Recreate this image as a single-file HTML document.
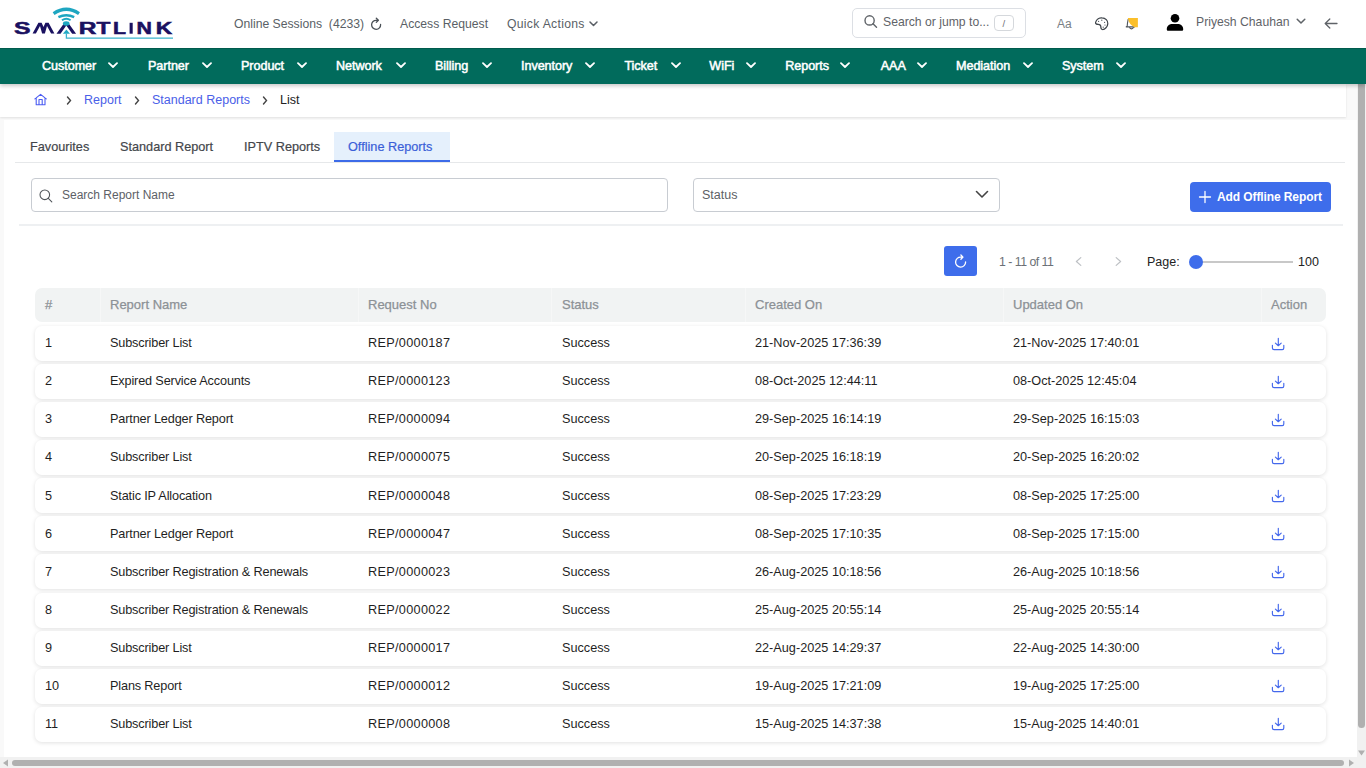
<!DOCTYPE html>
<html><head><meta charset="utf-8">
<style>
*{box-sizing:border-box;margin:0;padding:0}
html,body{width:1366px;height:768px;overflow:hidden;background:#f9f9f9;font-family:"Liberation Sans",sans-serif;color:#222}
.abs{position:absolute}
.t{position:absolute;white-space:nowrap;line-height:1}
#top{position:absolute;left:0;top:0;width:1366px;height:48px;background:#fff;z-index:2}
#nav{position:absolute;left:0;top:48px;width:1366px;height:36px;background:#016b5c;box-shadow:0 2px 4px rgba(0,0,0,.22);z-index:1}
.nv{position:absolute;z-index:3;top:60px;color:#fff;font-size:12.6px;font-weight:400;-webkit-text-stroke:0.5px #fff;letter-spacing:-0.05px;line-height:1;white-space:nowrap}
.nvc{position:absolute;z-index:3;top:62px}
#bc{position:absolute;left:0;top:84px;width:1346px;height:33px;background:#fff;box-shadow:0 1px 2px rgba(0,0,0,.10)}
#card{position:absolute;left:4px;top:120px;width:1353px;height:638px;background:#fff}
.tab{position:absolute;top:141.2px;-webkit-text-stroke:0.2px currentColor;font-size:12.7px;color:#43464b;white-space:nowrap;line-height:1}
.row{position:absolute;left:35px;width:1291px;height:35px;background:#fff;border-radius:7px;box-shadow:0 1px 4px rgba(0,0,0,.12)}
.cell{position:absolute;font-size:12.7px;color:#1f1f1f;white-space:nowrap;line-height:1}
.hd{position:absolute;top:298px;font-size:13px;color:#8c9196;-webkit-text-stroke:0.25px currentColor;white-space:nowrap;line-height:1}
.bct{position:absolute;top:93.5px;font-size:12.5px;white-space:nowrap;line-height:1}

</style></head><body>
<div id="top">
  <svg class="abs" style="left:0;top:0" width="200" height="46" viewBox="0 0 200 46">
<text x="14" y="33.6" font-family="Liberation Sans" font-weight="700" font-size="15.6" fill="#1a1160" stroke="#1a1160" stroke-width="0.5" textLength="16.5" lengthAdjust="spacingAndGlyphs">S</text><path d="M32.6 33.6 38.4 22.8H41.6L43.5 26.9 45.4 22.8H48.6L54.4 33.6H51.1L47 25.9 44.9 33.6H42.1L40 25.9 35.9 33.6Z" fill="#1a1160"/><text x="78.8" y="33.6" font-family="Liberation Sans" font-weight="700" font-size="15.6" fill="#1a1160" stroke="#1a1160" stroke-width="0.5" textLength="17.7" lengthAdjust="spacingAndGlyphs">R</text><text x="96.5" y="33.6" font-family="Liberation Sans" font-weight="700" font-size="15.6" fill="#1a1160" stroke="#1a1160" stroke-width="0.5" textLength="13.9" lengthAdjust="spacingAndGlyphs">T</text><text x="113" y="33.6" font-family="Liberation Sans" font-weight="700" font-size="15.6" fill="#1a1160" stroke="#1a1160" stroke-width="0.5" textLength="13.0" lengthAdjust="spacingAndGlyphs">L</text><rect x="129.6" y="22.8" width="3.1" height="10.9" fill="#1a1160"/><text x="136.5" y="33.6" font-family="Liberation Sans" font-weight="700" font-size="15.6" fill="#1a1160" stroke="#1a1160" stroke-width="0.5" textLength="15.4" lengthAdjust="spacingAndGlyphs">N</text><text x="155.8" y="33.6" font-family="Liberation Sans" font-weight="700" font-size="15.6" fill="#1a1160" stroke="#1a1160" stroke-width="0.5" textLength="16.5" lengthAdjust="spacingAndGlyphs">K</text>
<path d="M56.5 33.7 64.4 22.8H68.2L76.1 33.7H72.2L66.3 25.6 60.5 33.7Z" fill="#1a1160"/>
<path d="M62.9 33.7 66.4 29.4 70 33.7Z" fill="#22a9c4"/>
<path d="M66.4 33.5V38.2H173" fill="none" stroke="#3ab4cd" stroke-width="1.3"/>
<path d="M53.6 13.6Q66.3 5 79 13.6" fill="none" stroke="#1ea6c1" stroke-width="3.3"/>
<path d="M58.4 17.2Q66.3 13.4 74.2 17.2" fill="none" stroke="#1ea6c1" stroke-width="2.5"/>
<path d="M62 20.3Q66.3 17.1 70.6 20.3" fill="none" stroke="#1ea6c1" stroke-width="2"/>
<ellipse cx="66.2" cy="23.5" rx="3.3" ry="2.2" fill="#1ea6c1"/>
</svg>
  <div class="t" style="left:234px;top:18px;font-size:12.2px;color:#5a5f66">Online Sessions&nbsp; (4233)</div>
  <svg class="abs" style="left:364px;top:12px" width="24" height="22" viewBox="364 12 24 22" fill="none" stroke="#4a5056" stroke-width="1.3" stroke-linecap="round" stroke-linejoin="round"><path d="M380.6 24.5A4.5 4.5 0 1 1 376.3 20.3H378.2M376.3 18.2 378.4 20.3 376.3 22.4"/></svg>
  <div class="t" style="left:400px;top:18px;font-size:12.2px;color:#5a5f66">Access Request</div>
  <div class="t" style="left:507px;top:18px;font-size:12.2px;color:#5a5f66;letter-spacing:0.3px">Quick Actions</div>
  <svg class="abs" style="left:589px;top:21px" width="9" height="6" viewBox="0 0 9 6" fill="none" stroke="#5a5f66" stroke-width="1.5" stroke-linecap="round" stroke-linejoin="round"><path d="M1 1 4.5 4.5 8 1"/></svg>
  <div class="abs" style="left:852px;top:8px;width:174px;height:30px;border:1px solid #dcdfe4;border-radius:5px"></div>
  <svg class="abs" style="left:864px;top:15px" width="14" height="13" viewBox="0 0 14 13" fill="none" stroke="#5f6368" stroke-width="1.4" stroke-linecap="round"><circle cx="5.6" cy="5.4" r="4.6"/><path d="M9 8.8 12.5 12.2"/></svg>
  <div class="t" style="left:883px;top:16px;font-size:12.2px;color:#5f6368">Search or jump to...</div>
  <div class="abs" style="left:994px;top:15px;width:20px;height:16px;border:1px solid #d5d8dc;border-radius:4px"></div>
  <div class="t" style="left:1002.5px;top:19px;font-size:9.5px;color:#6a6e73">/</div>
  <div class="t" style="left:1057px;top:18px;font-size:12px;color:#7a7f85">Aa</div>
  <svg class="abs" style="left:1090px;top:12px" width="24" height="22" viewBox="1090 12 24 22"><path d="M1095.6 22.4C1096.5 19.2 1099.5 17.6 1102 17.8 1105.5 18 1108 20.6 1107.8 23.6 1107.6 26.8 1105 29.6 1102.4 29.5 1101 29.4 1100.8 27.8 1100.8 26.6 1100.8 25 1099.8 24.3 1098.2 24.3 1096.6 24.3 1095.2 23.8 1095.6 22.4Z" fill="none" stroke="#40464c" stroke-width="1.25" stroke-linejoin="round"/><g fill="#40464c"><circle cx="1098.6" cy="21.3" r=".6"/><circle cx="1101.8" cy="20.2" r=".6"/><circle cx="1104.6" cy="22.3" r=".6"/><circle cx="1105" cy="25" r=".6"/><circle cx="1103.2" cy="27.2" r=".6"/></g></svg>
  <svg class="abs" style="left:1120px;top:12px" width="24" height="22" viewBox="1120 12 24 22"><path d="M1128.2 19.2Q1127.4 23 1127.2 26.2L1125.9 26.9H1134.5" fill="none" stroke="#50565c" stroke-width="1.1" stroke-linecap="round"/><path d="M1129.6 27.7Q1131.4 30.1 1133.4 27.7" fill="none" stroke="#50565c" stroke-width="1.1" stroke-linecap="round"/><path d="M1128 17.9H1137.9V27.2H1134.6Q1129.3 25.2 1128 18.6Z" fill="#fbbf2a"/></svg>
  <svg class="abs" style="left:1166px;top:13px" width="18" height="18" viewBox="0 0 18 18"><circle cx="9" cy="5.2" r="4.3" fill="#000"/><path d="M0.8 16.2c0-3 2.3-5.2 5.2-5.2h6c2.9 0 5.2 2.2 5.2 5.2v0.2c0 0.8-0.6 1.3-1.3 1.3H2.1c-0.7 0-1.3-0.5-1.3-1.3z" fill="#000"/></svg>
  <div class="t" style="left:1196px;top:16px;font-size:12.2px;color:#5f6368">Priyesh Chauhan</div>
  <svg class="abs" style="left:1296px;top:18px" width="10" height="7" viewBox="0 0 10 7" fill="none" stroke="#5f6368" stroke-width="1.5" stroke-linecap="round" stroke-linejoin="round"><path d="M1.2 1.2 5 5 8.8 1.2"/></svg>
  <svg class="abs" style="left:1324px;top:18px" width="14" height="11" viewBox="0 0 14 11" fill="none" stroke="#5f6368" stroke-width="1.3" stroke-linecap="round" stroke-linejoin="round"><path d="M13 5.5H1.2M5.8 1 1.2 5.5 5.8 10"/></svg>
</div>
<div id="nav"></div>
<div class="abs" style="left:0;top:48px;width:1366px;height:1px;background:#005b4d;z-index:2"></div>
<div class="nv" style="left:42px">Customer</div><svg class="nvc" style="left:108.0px" width="10" height="7" viewBox="0 0 10 7" fill="none" stroke="#fff" stroke-width="1.8" stroke-linecap="round" stroke-linejoin="round"><path d="M1 1.2 5 5 9 1.2"/></svg>
<div class="nv" style="left:148px">Partner</div><svg class="nvc" style="left:201.5px" width="10" height="7" viewBox="0 0 10 7" fill="none" stroke="#fff" stroke-width="1.8" stroke-linecap="round" stroke-linejoin="round"><path d="M1 1.2 5 5 9 1.2"/></svg>
<div class="nv" style="left:241px">Product</div><svg class="nvc" style="left:296.5px" width="10" height="7" viewBox="0 0 10 7" fill="none" stroke="#fff" stroke-width="1.8" stroke-linecap="round" stroke-linejoin="round"><path d="M1 1.2 5 5 9 1.2"/></svg>
<div class="nv" style="left:336px">Network</div><svg class="nvc" style="left:395.5px" width="10" height="7" viewBox="0 0 10 7" fill="none" stroke="#fff" stroke-width="1.8" stroke-linecap="round" stroke-linejoin="round"><path d="M1 1.2 5 5 9 1.2"/></svg>
<div class="nv" style="left:435px">Billing</div><svg class="nvc" style="left:481.5px" width="10" height="7" viewBox="0 0 10 7" fill="none" stroke="#fff" stroke-width="1.8" stroke-linecap="round" stroke-linejoin="round"><path d="M1 1.2 5 5 9 1.2"/></svg>
<div class="nv" style="left:521px">Inventory</div><svg class="nvc" style="left:584.9px" width="10" height="7" viewBox="0 0 10 7" fill="none" stroke="#fff" stroke-width="1.8" stroke-linecap="round" stroke-linejoin="round"><path d="M1 1.2 5 5 9 1.2"/></svg>
<div class="nv" style="left:624.4px">Ticket</div><svg class="nvc" style="left:670.7px" width="10" height="7" viewBox="0 0 10 7" fill="none" stroke="#fff" stroke-width="1.8" stroke-linecap="round" stroke-linejoin="round"><path d="M1 1.2 5 5 9 1.2"/></svg>
<div class="nv" style="left:709.3px">WiFi</div><svg class="nvc" style="left:746.0px" width="10" height="7" viewBox="0 0 10 7" fill="none" stroke="#fff" stroke-width="1.8" stroke-linecap="round" stroke-linejoin="round"><path d="M1 1.2 5 5 9 1.2"/></svg>
<div class="nv" style="left:785.2px">Reports</div><svg class="nvc" style="left:840.4px" width="10" height="7" viewBox="0 0 10 7" fill="none" stroke="#fff" stroke-width="1.8" stroke-linecap="round" stroke-linejoin="round"><path d="M1 1.2 5 5 9 1.2"/></svg>
<div class="nv" style="left:880.7px">AAA</div><svg class="nvc" style="left:916.5px" width="10" height="7" viewBox="0 0 10 7" fill="none" stroke="#fff" stroke-width="1.8" stroke-linecap="round" stroke-linejoin="round"><path d="M1 1.2 5 5 9 1.2"/></svg>
<div class="nv" style="left:956px">Mediation</div><svg class="nvc" style="left:1022.8px" width="10" height="7" viewBox="0 0 10 7" fill="none" stroke="#fff" stroke-width="1.8" stroke-linecap="round" stroke-linejoin="round"><path d="M1 1.2 5 5 9 1.2"/></svg>
<div class="nv" style="left:1062px">System</div><svg class="nvc" style="left:1115.5px" width="10" height="7" viewBox="0 0 10 7" fill="none" stroke="#fff" stroke-width="1.8" stroke-linecap="round" stroke-linejoin="round"><path d="M1 1.2 5 5 9 1.2"/></svg>

<div id="bc"></div>
<svg class="abs" style="left:30px;top:90px" width="20" height="20" viewBox="30 90 20 20" fill="none" stroke="#4b5cf2" stroke-width="1.1" stroke-linejoin="round" stroke-linecap="round"><path d="M34.9 98.9 40.6 94.4 46.3 98.9M36.2 97.9V104.8H45V97.9M39 104.8V99.5H42.2V104.8"/></svg>
<svg class="abs" style="left:66px;top:96px" width="6" height="9" viewBox="0 0 6 9" fill="none" stroke="#444" stroke-width="1.4" stroke-linecap="round"><path d="M1.5 1 4.5 4.5 1.5 8"/></svg>
<div class="bct" style="left:84px;color:#4a60e8">Report</div>
<svg class="abs" style="left:134px;top:96px" width="6" height="9" viewBox="0 0 6 9" fill="none" stroke="#444" stroke-width="1.4" stroke-linecap="round"><path d="M1.5 1 4.5 4.5 1.5 8"/></svg>
<div class="bct" style="left:152px;color:#4a60e8">Standard Reports</div>
<svg class="abs" style="left:262px;top:96px" width="6" height="9" viewBox="0 0 6 9" fill="none" stroke="#444" stroke-width="1.4" stroke-linecap="round"><path d="M1.5 1 4.5 4.5 1.5 8"/></svg>
<div class="bct" style="left:280px;color:#222">List</div>

<div id="card"></div>
<div class="abs" style="left:15px;top:162px;width:1330px;height:1px;background:#e6e8ea"></div>
<div class="abs" style="left:334px;top:132px;width:116px;height:30px;background:#e5f0fc;border-bottom:2px solid #3d6be8"></div>
<div class="tab" style="left:30px">Favourites</div>
<div class="tab" style="left:120px">Standard Report</div>
<div class="tab" style="left:244px">IPTV Reports</div>
<div class="tab" style="left:348px;color:#3a5fd8">Offline Reports</div>

<div class="abs" style="left:31px;top:178px;width:637px;height:34px;border:1px solid #c8ccd2;border-radius:4px;background:#fff"></div>
<svg class="abs" style="left:39px;top:188.5px" width="14" height="14" viewBox="0 0 14 14" fill="none" stroke="#50555a" stroke-width="1.1" stroke-linecap="round"><circle cx="5.8" cy="5.8" r="4.8"/><path d="M9.3 9.3 12.8 12.8"/></svg>
<div class="t" style="left:62px;top:189px;font-size:12px;color:#5d6166">Search Report Name</div>

<div class="abs" style="left:693px;top:178px;width:307px;height:34px;border:1px solid #c8ccd2;border-radius:4px;background:#fff"></div>
<div class="t" style="left:702px;top:189px;font-size:12.5px;color:#5d6166">Status</div>
<svg class="abs" style="left:975px;top:190px" width="14" height="9" viewBox="0 0 14 9" fill="none" stroke="#444" stroke-width="1.6" stroke-linecap="round" stroke-linejoin="round"><path d="M1.5 1.5 7 7 12.5 1.5"/></svg>

<div class="abs" style="left:1190px;top:182px;width:141px;height:30px;background:#3e6deb;border-radius:4px"></div>
<svg class="abs" style="left:1198px;top:190px" width="14" height="14" viewBox="0 0 14 14" fill="none" stroke="#fff" stroke-width="1.3" stroke-linecap="round"><path d="M7 1.5v11M1.5 7h11"/></svg>
<div class="t" style="left:1217px;top:191px;font-size:12px;font-weight:700;color:#fff;letter-spacing:-0.1px">Add Offline Report</div>

<div class="abs" style="left:19px;top:224px;width:1324px;height:2px;background:#eef0f2"></div>

<div class="abs" style="left:944px;top:246px;width:33px;height:30px;background:#3e6deb;border-radius:3px"></div>
<svg class="abs" style="left:948px;top:250px" width="24" height="24" viewBox="948 250 24 24" fill="none" stroke="#fff" stroke-width="1.3" stroke-linecap="round" stroke-linejoin="round"><path d="M965.6 262A5 5 0 1 1 960.9 257.1H962.6M960.9 255 963 257.1 960.9 259.2"/></svg>
<div class="t" style="left:999px;top:255.5px;font-size:12.3px;color:#6b7076;letter-spacing:-0.5px">1 - 11 of 11</div>
<svg class="abs" style="left:1075px;top:257px" width="7" height="9" viewBox="0 0 7 9" fill="none" stroke="#bdc0c4" stroke-width="1.2" stroke-linecap="round" stroke-linejoin="round"><path d="M5.8 0.6 1.4 4.5 5.8 8.4"/></svg>
<svg class="abs" style="left:1115px;top:257px" width="7" height="9" viewBox="0 0 7 9" fill="none" stroke="#bdc0c4" stroke-width="1.2" stroke-linecap="round" stroke-linejoin="round"><path d="M1.2 0.6 5.6 4.5 1.2 8.4"/></svg>
<div class="t" style="left:1147px;top:255.5px;font-size:12.5px;color:#222">Page:</div>
<div class="abs" style="left:1196px;top:260.5px;width:97px;height:2px;background:#c8c8c8"></div>
<div class="abs" style="left:1189px;top:255px;width:14px;height:14px;border-radius:50%;background:#3e6deb"></div>
<div class="t" style="left:1298px;top:255.5px;font-size:12.5px;color:#222">100</div>

<div class="abs" style="left:35px;top:288px;width:1291px;height:34px;background:#f1f3f3;border-radius:7px"></div>
<div class="abs" style="left:100px;top:288px;width:1px;height:34px;background:#f6f7f7"></div><div class="abs" style="left:358px;top:288px;width:1px;height:34px;background:#f6f7f7"></div><div class="abs" style="left:551px;top:288px;width:1px;height:34px;background:#f6f7f7"></div><div class="abs" style="left:745px;top:288px;width:1px;height:34px;background:#f6f7f7"></div><div class="abs" style="left:1003px;top:288px;width:1px;height:34px;background:#f6f7f7"></div><div class="abs" style="left:1261px;top:288px;width:1px;height:34px;background:#f6f7f7"></div><div class="hd" style="left:45px">#</div><div class="hd" style="left:110px">Report Name</div><div class="hd" style="left:368px">Request No</div><div class="hd" style="left:562px">Status</div><div class="hd" style="left:755px">Created On</div><div class="hd" style="left:1013px">Updated On</div><div class="hd" style="left:1271px">Action</div>
<!-- scrollbars -->
<div class="abs" style="left:1357px;top:84px;width:9px;height:684px;background:#f1f1f1"></div>
<div class="abs" style="left:1358px;top:84px;width:7px;height:644px;background:#b0b0b0;border-radius:0 0 3.5px 3.5px"></div>
<svg class="abs" style="left:1358px;top:750px" width="7" height="6" viewBox="0 0 7 6"><path d="M0 0.5h7L3.5 5.5z" fill="#b0b0b0"/></svg>
<div class="abs" style="left:0;top:757px;width:1366px;height:11px;background:#f1f1f1"></div>
<div class="abs" style="left:12px;top:760px;width:1332px;height:6px;background:#b0b0b0;border-radius:3px"></div>
<svg class="abs" style="left:2px;top:759px" width="7" height="8" viewBox="0 0 7 8"><path d="M6 0.5v7L1 4z" fill="#b0b0b0"/></svg>
<svg class="abs" style="left:1348px;top:759px" width="7" height="8" viewBox="0 0 7 8"><path d="M1 0.5v7L6 4z" fill="#b0b0b0"/></svg>
<div class="row" style="top:325.8px"></div>
<div class="cell" style="left:45px;top:337.1px">1</div><div class="cell" style="left:110px;top:337.1px;letter-spacing:-0.15px">Subscriber List</div><div class="cell" style="left:368px;top:337.1px;letter-spacing:0.3px">REP/0000187</div><div class="cell" style="left:562px;top:337.1px">Success</div><div class="cell" style="left:755px;top:337.1px">21-Nov-2025 17:36:39</div><div class="cell" style="left:1013px;top:337.1px">21-Nov-2025 17:40:01</div><div class="abs" style="left:1271px;top:335.8px"><svg width="15" height="15" viewBox="0 0 15 15" fill="none" stroke="#4468ec" stroke-width="1.15" stroke-linecap="round" stroke-linejoin="round"><path d="M7.3 2.2v7.3M4.4 7.1 7.3 9.7 10.2 7.1M1.4 9.3v2.6q0 1.7 1.7 1.7h8.2q1.5 0 1.5-1.7V9.3"/></svg></div>
<div class="row" style="top:363.9px"></div>
<div class="cell" style="left:45px;top:375.2px">2</div><div class="cell" style="left:110px;top:375.2px;letter-spacing:-0.15px">Expired Service Accounts</div><div class="cell" style="left:368px;top:375.2px;letter-spacing:0.3px">REP/0000123</div><div class="cell" style="left:562px;top:375.2px">Success</div><div class="cell" style="left:755px;top:375.2px">08-Oct-2025 12:44:11</div><div class="cell" style="left:1013px;top:375.2px">08-Oct-2025 12:45:04</div><div class="abs" style="left:1271px;top:373.8px"><svg width="15" height="15" viewBox="0 0 15 15" fill="none" stroke="#4468ec" stroke-width="1.15" stroke-linecap="round" stroke-linejoin="round"><path d="M7.3 2.2v7.3M4.4 7.1 7.3 9.7 10.2 7.1M1.4 9.3v2.6q0 1.7 1.7 1.7h8.2q1.5 0 1.5-1.7V9.3"/></svg></div>
<div class="row" style="top:402.0px"></div>
<div class="cell" style="left:45px;top:413.3px">3</div><div class="cell" style="left:110px;top:413.3px;letter-spacing:-0.15px">Partner Ledger Report</div><div class="cell" style="left:368px;top:413.3px;letter-spacing:0.3px">REP/0000094</div><div class="cell" style="left:562px;top:413.3px">Success</div><div class="cell" style="left:755px;top:413.3px">29-Sep-2025 16:14:19</div><div class="cell" style="left:1013px;top:413.3px">29-Sep-2025 16:15:03</div><div class="abs" style="left:1271px;top:411.8px"><svg width="15" height="15" viewBox="0 0 15 15" fill="none" stroke="#4468ec" stroke-width="1.15" stroke-linecap="round" stroke-linejoin="round"><path d="M7.3 2.2v7.3M4.4 7.1 7.3 9.7 10.2 7.1M1.4 9.3v2.6q0 1.7 1.7 1.7h8.2q1.5 0 1.5-1.7V9.3"/></svg></div>
<div class="row" style="top:440.1px"></div>
<div class="cell" style="left:45px;top:451.4px">4</div><div class="cell" style="left:110px;top:451.4px;letter-spacing:-0.15px">Subscriber List</div><div class="cell" style="left:368px;top:451.4px;letter-spacing:0.3px">REP/0000075</div><div class="cell" style="left:562px;top:451.4px">Success</div><div class="cell" style="left:755px;top:451.4px">20-Sep-2025 16:18:19</div><div class="cell" style="left:1013px;top:451.4px">20-Sep-2025 16:20:02</div><div class="abs" style="left:1271px;top:449.8px"><svg width="15" height="15" viewBox="0 0 15 15" fill="none" stroke="#4468ec" stroke-width="1.15" stroke-linecap="round" stroke-linejoin="round"><path d="M7.3 2.2v7.3M4.4 7.1 7.3 9.7 10.2 7.1M1.4 9.3v2.6q0 1.7 1.7 1.7h8.2q1.5 0 1.5-1.7V9.3"/></svg></div>
<div class="row" style="top:478.2px"></div>
<div class="cell" style="left:45px;top:489.5px">5</div><div class="cell" style="left:110px;top:489.5px;letter-spacing:-0.15px">Static IP Allocation</div><div class="cell" style="left:368px;top:489.5px;letter-spacing:0.3px">REP/0000048</div><div class="cell" style="left:562px;top:489.5px">Success</div><div class="cell" style="left:755px;top:489.5px">08-Sep-2025 17:23:29</div><div class="cell" style="left:1013px;top:489.5px">08-Sep-2025 17:25:00</div><div class="abs" style="left:1271px;top:487.8px"><svg width="15" height="15" viewBox="0 0 15 15" fill="none" stroke="#4468ec" stroke-width="1.15" stroke-linecap="round" stroke-linejoin="round"><path d="M7.3 2.2v7.3M4.4 7.1 7.3 9.7 10.2 7.1M1.4 9.3v2.6q0 1.7 1.7 1.7h8.2q1.5 0 1.5-1.7V9.3"/></svg></div>
<div class="row" style="top:516.3px"></div>
<div class="cell" style="left:45px;top:527.6px">6</div><div class="cell" style="left:110px;top:527.6px;letter-spacing:-0.15px">Partner Ledger Report</div><div class="cell" style="left:368px;top:527.6px;letter-spacing:0.3px">REP/0000047</div><div class="cell" style="left:562px;top:527.6px">Success</div><div class="cell" style="left:755px;top:527.6px">08-Sep-2025 17:10:35</div><div class="cell" style="left:1013px;top:527.6px">08-Sep-2025 17:15:00</div><div class="abs" style="left:1271px;top:525.8px"><svg width="15" height="15" viewBox="0 0 15 15" fill="none" stroke="#4468ec" stroke-width="1.15" stroke-linecap="round" stroke-linejoin="round"><path d="M7.3 2.2v7.3M4.4 7.1 7.3 9.7 10.2 7.1M1.4 9.3v2.6q0 1.7 1.7 1.7h8.2q1.5 0 1.5-1.7V9.3"/></svg></div>
<div class="row" style="top:554.4px"></div>
<div class="cell" style="left:45px;top:565.7px">7</div><div class="cell" style="left:110px;top:565.7px;letter-spacing:-0.15px">Subscriber Registration &amp; Renewals</div><div class="cell" style="left:368px;top:565.7px;letter-spacing:0.3px">REP/0000023</div><div class="cell" style="left:562px;top:565.7px">Success</div><div class="cell" style="left:755px;top:565.7px">26-Aug-2025 10:18:56</div><div class="cell" style="left:1013px;top:565.7px">26-Aug-2025 10:18:56</div><div class="abs" style="left:1271px;top:563.8px"><svg width="15" height="15" viewBox="0 0 15 15" fill="none" stroke="#4468ec" stroke-width="1.15" stroke-linecap="round" stroke-linejoin="round"><path d="M7.3 2.2v7.3M4.4 7.1 7.3 9.7 10.2 7.1M1.4 9.3v2.6q0 1.7 1.7 1.7h8.2q1.5 0 1.5-1.7V9.3"/></svg></div>
<div class="row" style="top:592.5px"></div>
<div class="cell" style="left:45px;top:603.8px">8</div><div class="cell" style="left:110px;top:603.8px;letter-spacing:-0.15px">Subscriber Registration &amp; Renewals</div><div class="cell" style="left:368px;top:603.8px;letter-spacing:0.3px">REP/0000022</div><div class="cell" style="left:562px;top:603.8px">Success</div><div class="cell" style="left:755px;top:603.8px">25-Aug-2025 20:55:14</div><div class="cell" style="left:1013px;top:603.8px">25-Aug-2025 20:55:14</div><div class="abs" style="left:1271px;top:601.8px"><svg width="15" height="15" viewBox="0 0 15 15" fill="none" stroke="#4468ec" stroke-width="1.15" stroke-linecap="round" stroke-linejoin="round"><path d="M7.3 2.2v7.3M4.4 7.1 7.3 9.7 10.2 7.1M1.4 9.3v2.6q0 1.7 1.7 1.7h8.2q1.5 0 1.5-1.7V9.3"/></svg></div>
<div class="row" style="top:630.6px"></div>
<div class="cell" style="left:45px;top:641.9px">9</div><div class="cell" style="left:110px;top:641.9px;letter-spacing:-0.15px">Subscriber List</div><div class="cell" style="left:368px;top:641.9px;letter-spacing:0.3px">REP/0000017</div><div class="cell" style="left:562px;top:641.9px">Success</div><div class="cell" style="left:755px;top:641.9px">22-Aug-2025 14:29:37</div><div class="cell" style="left:1013px;top:641.9px">22-Aug-2025 14:30:00</div><div class="abs" style="left:1271px;top:639.8px"><svg width="15" height="15" viewBox="0 0 15 15" fill="none" stroke="#4468ec" stroke-width="1.15" stroke-linecap="round" stroke-linejoin="round"><path d="M7.3 2.2v7.3M4.4 7.1 7.3 9.7 10.2 7.1M1.4 9.3v2.6q0 1.7 1.7 1.7h8.2q1.5 0 1.5-1.7V9.3"/></svg></div>
<div class="row" style="top:668.7px"></div>
<div class="cell" style="left:45px;top:680.0px">10</div><div class="cell" style="left:110px;top:680.0px;letter-spacing:-0.15px">Plans Report</div><div class="cell" style="left:368px;top:680.0px;letter-spacing:0.3px">REP/0000012</div><div class="cell" style="left:562px;top:680.0px">Success</div><div class="cell" style="left:755px;top:680.0px">19-Aug-2025 17:21:09</div><div class="cell" style="left:1013px;top:680.0px">19-Aug-2025 17:25:00</div><div class="abs" style="left:1271px;top:677.8px"><svg width="15" height="15" viewBox="0 0 15 15" fill="none" stroke="#4468ec" stroke-width="1.15" stroke-linecap="round" stroke-linejoin="round"><path d="M7.3 2.2v7.3M4.4 7.1 7.3 9.7 10.2 7.1M1.4 9.3v2.6q0 1.7 1.7 1.7h8.2q1.5 0 1.5-1.7V9.3"/></svg></div>
<div class="row" style="top:706.8px"></div>
<div class="cell" style="left:45px;top:718.1px">11</div><div class="cell" style="left:110px;top:718.1px;letter-spacing:-0.15px">Subscriber List</div><div class="cell" style="left:368px;top:718.1px;letter-spacing:0.3px">REP/0000008</div><div class="cell" style="left:562px;top:718.1px">Success</div><div class="cell" style="left:755px;top:718.1px">15-Aug-2025 14:37:38</div><div class="cell" style="left:1013px;top:718.1px">15-Aug-2025 14:40:01</div><div class="abs" style="left:1271px;top:715.8px"><svg width="15" height="15" viewBox="0 0 15 15" fill="none" stroke="#4468ec" stroke-width="1.15" stroke-linecap="round" stroke-linejoin="round"><path d="M7.3 2.2v7.3M4.4 7.1 7.3 9.7 10.2 7.1M1.4 9.3v2.6q0 1.7 1.7 1.7h8.2q1.5 0 1.5-1.7V9.3"/></svg></div>
</body></html>
